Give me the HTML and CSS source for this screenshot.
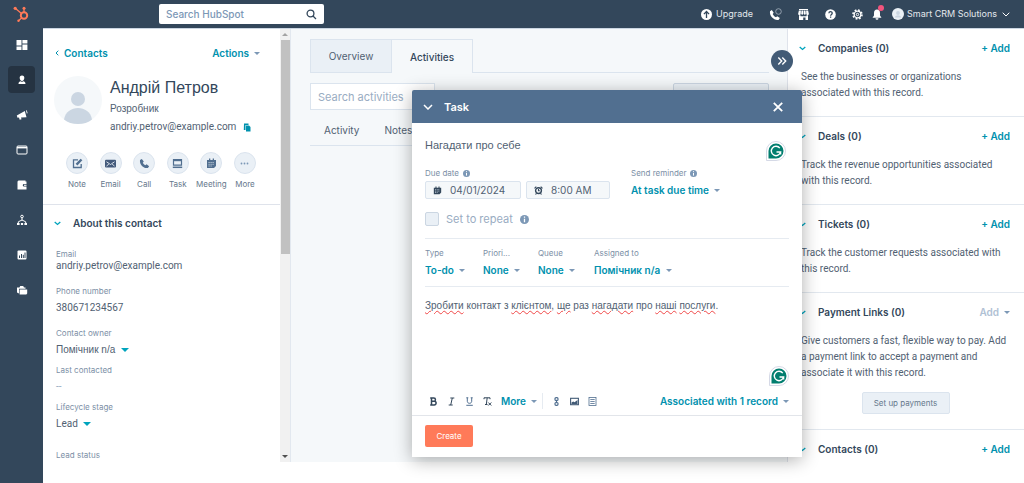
FILE: index.html
```html
<!DOCTYPE html>
<html lang="en">
<head>
<meta charset="utf-8">
<title>Contact</title>
<link rel="stylesheet" href="styles.css">
</head>
<body>
<header class="topbar">
  <a class="logo" href="#" aria-label="Home">
    <svg width="17" height="17" viewBox="0 0 17 17" fill="none" stroke="#ff7a59"><circle cx="11" cy="9.500" r="3.200" stroke-width="2"/><path d="M11 6V2.500M8.500 7.400 2.500 2.600M8.800 11.800l-3 2.800" stroke-width="1.300"/><g fill="#ff7a59" stroke="none"><circle cx="11" cy="2.300" r="1.500"/><circle cx="2.200" cy="2.300" r="1.600"/><circle cx="5.500" cy="14.700" r="1.200"/></g></svg>
  </a>
  <form class="search">
    <input type="search" placeholder="Search HubSpot" aria-label="Search HubSpot">
    <button type="button" aria-label="Search"><svg width="11" height="11" viewBox="0 0 11 11" fill="none" stroke="#33475b" stroke-width="1.300"><circle cx="4.500" cy="4.500" r="3.400"/><path d="M7 7l3 3"/></svg></button>
  </form>
  <nav class="tools">
    <a class="upgrade" href="#"><svg width="11" height="11" viewBox="0 0 11 11"><circle cx="5.500" cy="5.500" r="5.500" fill="#fff"/><path d="M5.500 9V2.700M2.900 5.100l2.600-2.600 2.600 2.600" fill="none" stroke="#33475b" stroke-width="1.300"/></svg>Upgrade</a>
    <button class="tool" aria-label="Calls"><svg width="13" height="13" viewBox="0 0 13 13"><path d="M1 3.300 2.800 2l1.900 2.700-1 1.200c.7 1.500 1.800 2.600 3.300 3.300l1.200-1 2.700 1.900-1.400 1.800C5.200 12.800.2 8 1 3.300z" fill="#fff"/><circle cx="9.500" cy="3.500" r="2.800" fill="none" stroke="#a9b5c1" stroke-width=".8"/></svg></button>
    <button class="tool" aria-label="Marketplace"><svg width="11" height="11" viewBox="0 0 11 11" fill="#fff"><path d="M1 0h9v1H1zM.9 1.600h2L2.700 5a1.200 1.200 0 0 1-2.500-.5zM3.500 1.600h1.700V5a1.200 1.200 0 0 1-2 0zM5.800 1.600h1.700L7.800 5a1.200 1.200 0 0 1-2 0zM8.100 1.600h2l.7 2.900A1.200 1.200 0 0 1 8.300 5z"/><path d="M1 6.300h1.500v1h6v-1H10V11H7.500V8.500H5.200V11H1z"/></svg></button>
    <button class="tool" aria-label="Help"><svg width="11" height="11" viewBox="0 0 11 11"><circle cx="5.500" cy="5.500" r="5.300" fill="#fff"/><path d="M3.900 4.300c0-2.200 3.300-2.100 3.300-.1 0 1.200-1.600 1.200-1.600 2.500M5.600 7.500v1.200" fill="none" stroke="#33475b" stroke-width="1.300"/></svg></button>
    <button class="tool" aria-label="Settings"><svg width="11" height="11" viewBox="0 0 11 11" fill="none" stroke="#fff"><circle cx="5.500" cy="5.500" r="3.300" stroke-width="1.300"/><circle cx="5.500" cy="5.500" r="4.500" stroke-width="1.600" stroke-dasharray="1.770"/><circle cx="5.500" cy="5.500" r="1.200"/></svg></button>
    <button class="tool bell" aria-label="Notifications"><svg width="10" height="11" viewBox="0 0 10 11" fill="#fff"><path d="M5 .5C3 .5 2 2 2 4v2.500L.5 8.700h9L8 6.500V4C8 2 7 .5 5 .5zM3.500 9.300h3a1.500 1.500 0 0 1-3 0z"/></svg><span class="dot"></span></button>
    <button class="account"><svg width="12" height="12" viewBox="0 0 12 12"><circle cx="6" cy="6" r="6" fill="#eaf0f6"/><circle cx="6" cy="5" r="1.900" fill="#cbd6e2"/><path d="M2.800 9.500c.6-3 5.800-3 6.400 0z" fill="#cbd6e2"/></svg>Smart CRM Solutions<svg class="caret-line" width="8" height="5" viewBox="0 0 8 5" fill="none" stroke="#fff"><path d="M.7.700 4 4 7.300.700"/></svg></button>
  </nav>
</header>
<div class="shell">
  <nav class="rail">
    <a href="#" aria-label="Dashboard"><svg width="12" height="12" viewBox="0 0 12 12" fill="#fff"><path d="M.5 1h5v5.500h-5zM.5 7.500h5V11h-5zM6.400 1h5v3.400h-5zM6.400 5.400h5V11h-5z"/></svg></a>
    <a href="#" class="active" aria-label="Contacts"><svg width="12" height="12" viewBox="0 0 12 12" fill="#fff"><path d="M6 1.500a2.400 2.400 0 0 1 2.300 2.600C8.300 5.600 7.400 7 6 7S3.700 5.600 3.700 4.100A2.400 2.400 0 0 1 6 1.500zM2.500 10c0-2 1-2.800 2.300-2.800L6 8l1.200-.8C8.500 7.200 9.500 8 9.500 10z"/></svg></a>
    <a href="#" aria-label="Marketing"><svg width="12" height="12" viewBox="0 0 12 12" fill="#fff"><path d="M.8 6.500 8.800 2l1.700 6.200-5.500.3.500 1.700-1.800.5L3 8.500l-1.500.3zM10 1.500l.8-.3.8 3-.8.200z"/></svg></a>
    <a href="#" aria-label="Content"><svg width="12" height="12" viewBox="0 0 12 12" fill="none" stroke="#fff"><rect x="1" y="2" width="10" height="8" rx="1"/><path d="M1 3.600h10" stroke-width="1.600"/></svg></a>
    <a href="#" aria-label="Commerce"><svg width="12" height="12" viewBox="0 0 12 12" fill="#fff"><path d="M1.500 2.500 2.500 1.500h7v1h1V5H8a1 1 0 0 0 0 2.500h2.500v3h-9z"/><path d="M8 5.700h2.500v1.100H8z"/></svg></a>
    <a href="#" aria-label="Automations"><svg width="12" height="12" viewBox="0 0 12 12" fill="none" stroke="#fff"><circle cx="6" cy="2.500" r="1.300"/><path d="M6 4v2.500M2.300 9V7.800L6 6l3.700 1.800V9"/><path d="M1 10h2.600M4.900 10h2.200M8.400 10H11" stroke-width="1.800"/></svg></a>
    <a href="#" aria-label="Reporting"><svg width="12" height="12" viewBox="0 0 12 12"><rect x="1.500" y="1.500" width="9" height="9" rx="1" fill="#fff"/><path d="M3.500 9V6.500M5.500 9V5M7.300 9V5.800M9 9V3.500" stroke="#33475b"/></svg></a>
    <a href="#" aria-label="Library"><svg width="12" height="12" viewBox="0 0 12 12" fill="#fff"><path d="M1 3.500h2.500l.7-1.500h3l.8 1.500h1.500v1.300H3v4.700l-2-1z"/><path d="M3.600 5.400h7.600v4.100l-.9.900H3.600z"/></svg></a>
  </nav>
  <div class="workspace">
    <aside class="contact">
      <div class="contact-body">
        <section class="summary">
          <div class="summary-top">
            <a class="link back" href="#"><svg width="4" height="6" viewBox="0 0 4 6" fill="none" stroke="#0091ae"><path d="M3.300.700 1 3l2.300 2.300"/></svg>Contacts</a>
            <button class="link caret">Actions</button>
          </div>
          <div class="person">
            <svg class="avatar" width="48" height="48" viewBox="0 0 48 48"><circle cx="24" cy="24" r="24" fill="#f5f8fa"/><circle cx="24" cy="23" r="7" fill="#cbd6e2"/><path d="M10 43.500C12 28 36 28 38 43.500c-7 6-21 6-28 0z" fill="#cbd6e2"/></svg>
            <div class="person-text">
              <h1 lang="uk">Андрій Петров</h1>
              <p lang="uk">Розробник</p>
              <p class="mail">andriy.petrov@example.com <button aria-label="Copy email"><svg width="8" height="9" viewBox="0 0 8 9"><path d="M1 .5h4.500V2H2.500v5H.8z" fill="#0091ae"/><path d="M3 2.500h3l1.500 1.500v4.500H3z" fill="#0091ae"/></svg></button></p>
            </div>
          </div>
          <div class="actions">
            <button><span><svg width="11" height="11" viewBox="0 0 11 11" fill="none" stroke="#516f90" stroke-width="1.300"><path d="M6 1.800H1.500v7.700h7.700V6"/><path d="M4.500 6.700 9.500 1.500" stroke-width="2.400"/></svg></span>Note</button>
            <button><span><svg width="11" height="11" viewBox="0 0 11 11"><rect y="1.800" width="11" height="7.600" rx="1" fill="#42597b"/><path d="m1.500 3.800 3 2 1 .7 1-.7 3-2M1.500 8l2.300-1.800M9.500 8 7.200 6.200" fill="none" stroke="#eaf0f6" stroke-width=".9"/></svg></span>Email</button>
            <button><span><svg width="11" height="11" viewBox="0 0 11 11" fill="#516f90"><path d="M1 2 2.800.900l2 2.600-1 1.200c.6 1.200 1.400 2 2.600 2.600l1.200-1 2.500 2-1.200 1.600C4.500 11 .3 6.500 1 2z"/></svg></span>Call</button>
            <button><span><svg width="11" height="11" viewBox="0 0 11 11" fill="none" stroke="#516f90"><path d="M1.500 1.500h8V7.200h-8z" stroke-width="1.200"/><path d="M1 2.200h9" stroke-width="2"/><path d="M.8 9.300h9.400" stroke-width="1.500"/></svg></span>Task</button>
            <button><span><svg width="11" height="11" viewBox="0 0 11 11"><path d="M1 2h9v6L8 10H1zM3 .5h1.300V2H3zM6.700.500H8V2H6.700z" fill="#516f90"/><path d="M2.500 4.500h6M2.500 6.300h6M2.500 8h3.500" stroke="#cbd6e2" stroke-width=".9" stroke-dasharray="1.200 .8"/></svg></span>Meeting</button>
            <button><span><svg width="11" height="11" viewBox="0 0 11 11" fill="#7c98b6"><circle cx="2.500" cy="5.500" r=".9"/><circle cx="5.500" cy="5.500" r=".9"/><circle cx="8.500" cy="5.500" r=".9"/></svg></span>More</button>
          </div>
        </section>
        <section class="about">
          <h2><svg width="7" height="5" viewBox="0 0 7 5" fill="none" stroke="#00a4bd" stroke-width="1.300"><path d="M.7 1 3.500 3.500 6.300 1"/></svg>About this contact</h2>
          <dl>
            <div class="snug"><dt>Email</dt><dd>andriy.petrov@example.com</dd></div>
            <div><dt>Phone number</dt><dd>380671234567</dd></div>
            <div class="picker"><dt><label for="owner">Contact owner</label></dt><dd><span class="pick teal"><select id="owner" lang="uk"><option>Помічник n/a</option></select></span></dd></div>
            <div class="picker"><dt>Last contacted</dt><dd class="empty">--</dd></div>
            <div class="last"><dt><label for="stage">Lifecycle stage</label></dt><dd><span class="pick teal"><select id="stage"><option>Lead</option></select></span></dd></div>
            <div><dt>Lead status</dt></div>
          </dl>
        </section>
      </div>
      <div class="scroller"><span class="up"></span><span class="thumb"></span><span class="down"></span></div>
    </aside>
    <main class="timeline">
      <div class="tabs"><button>Overview</button><button class="current">Activities</button></div>
      <div class="filter-row"><input type="search" placeholder="Search activities" aria-label="Search activities"><button aria-label="Collapse all"></button></div>
      <div class="subtabs"><button>Activity</button><button>Notes</button></div>
      <button class="expand" aria-label="Collapse sidebar"><svg width="10" height="10" viewBox="0 0 10 10" fill="none" stroke="#fff" stroke-width="1.400"><path d="M1.300 1.500 4.700 5 1.300 8.500M5.300 1.500 8.700 5 5.300 8.500"/></svg></button>
    </main>
    <aside class="related">
      <section>
        <h2><svg width="7" height="5" viewBox="0 0 7 5" fill="none" stroke="#00a4bd" stroke-width="1.300"><path d="M.7 1 3.500 3.500 6.300 1"/></svg>Companies (0)<button class="link">+ Add</button></h2>
        <p>See the businesses or organizations associated with this record.</p>
      </section>
      <section>
        <h2><svg width="7" height="5" viewBox="0 0 7 5" fill="none" stroke="#00a4bd" stroke-width="1.300"><path d="M.7 1 3.500 3.500 6.300 1"/></svg>Deals (0)<button class="link">+ Add</button></h2>
        <p>Track the revenue opportunities associated with this record.</p>
      </section>
      <section>
        <h2><svg width="7" height="5" viewBox="0 0 7 5" fill="none" stroke="#00a4bd" stroke-width="1.300"><path d="M.7 1 3.500 3.500 6.300 1"/></svg>Tickets (0)<button class="link">+ Add</button></h2>
        <p>Track the customer requests associated with this record.</p>
      </section>
      <section>
        <h2><svg width="7" height="5" viewBox="0 0 7 5" fill="none" stroke="#00a4bd" stroke-width="1.300"><path d="M.7 1 3.500 3.500 6.300 1"/></svg>Payment Links (0)<button class="link caret muted">Add</button></h2>
        <p>Give customers a fast, flexible way to pay. Add a payment link to accept a payment and associate it with this record.</p>
        <button class="setup">Set up payments</button>
      </section>
      <section>
        <h2><svg width="7" height="5" viewBox="0 0 7 5" fill="none" stroke="#00a4bd" stroke-width="1.300"><path d="M.7 1 3.500 3.500 6.300 1"/></svg>Contacts (0)<button class="link">+ Add</button></h2>
      </section>
    </aside>
  </div>
</div>
<section class="dialog" role="dialog" aria-labelledby="dialog-title">
  <header>
    <button aria-label="Minimize"><svg width="10" height="6" viewBox="0 0 10 6" fill="none" stroke="#fff" stroke-width="1.500"><path d="M1 1l4 4 4-4"/></svg></button>
    <h2 id="dialog-title">Task</h2>
    <button class="close" aria-label="Close"><svg width="10" height="10" viewBox="0 0 10 10" stroke="#fff" stroke-width="1.800"><path d="M.8.800l8.400 8.400M9.200.800.800 9.200"/></svg></button>
  </header>
  <div class="form">
    <div class="title-row"><input class="title" lang="uk" value="Нагадати про себе" aria-label="Task title">
      <svg class="grammar" width="20" height="20" viewBox="0 0 20 20"><path d="M10 .5A9.500 9.500 0 1 1 10 19.500H.5V10A9.500 9.500 0 0 1 10 .5z" fill="#fff" stroke="#d5d9e6"/><path d="M10 2.500a7.500 7.500 0 1 1 0 15H2.500V10A7.500 7.500 0 0 1 10 2.500z" fill="#027e6f"/><path d="M13.800 7.200A4.700 4.700 0 1 0 14.600 11H10.500M14.600 10.500V13.500" fill="none" stroke="#fff" stroke-width="1.400"/></svg></div>
    <div class="when">
      <div class="field"><label for="date">Due date <svg class="info" width="7" height="7" viewBox="0 0 7 7"><circle cx="3.500" cy="3.500" r="3.500" fill="#7c98b6"/><path d="M3.500 1.200v1M3.500 3v2.600" stroke="#fff"/></svg></label>
        <span class="box wide"><svg width="9" height="9" viewBox="0 0 11 11"><path d="M1 2h9v6L8 10H1zM3 .5h1.300V2H3zM6.700.500H8V2H6.700z" fill="#33475b"/><path d="M2.500 4.500h6M2.500 6.300h6M2.500 8h3.500" stroke="#cbd6e2" stroke-width=".9" stroke-dasharray="1.200 .8"/></svg><input id="date" value="04/01/2024"></span></div>
      <div class="field time"><span class="box"><svg width="9" height="9" viewBox="0 0 9 9" fill="none" stroke="#33475b"><circle cx="4.500" cy="4.600" r="2.900" stroke-width="1.400"/><path d="M4.500 3v1.800h1.300M.5 2.300 2.300.700M8.500 2.300 6.700.700M1.500 8.500l1-1.200M7.500 8.500l-1-1.200" stroke-width="1.100"/></svg><input value="8:00 AM" aria-label="Due time"></span></div>
      <div class="field remind"><label for="reminder">Send reminder <svg class="info" width="7" height="7" viewBox="0 0 7 7"><circle cx="3.500" cy="3.500" r="3.500" fill="#7c98b6"/><path d="M3.500 1.200v1M3.500 3v2.600" stroke="#fff"/></svg></label><span class="pick strong"><select id="reminder"><option>At task due time</option></select></span></div>
    </div>
    <label class="repeat"><input type="checkbox" disabled>Set to repeat<svg width="9" height="9" viewBox="0 0 7 7"><circle cx="3.500" cy="3.500" r="3.500" fill="#7c98b6"/><path d="M3.500 1.200v1M3.500 3v2.600" stroke="#fff"/></svg></label>
    <div class="props">
      <div class="field"><label for="type">Type</label><span class="pick strong"><select id="type"><option>To-do</option></select></span></div>
      <div class="field"><label for="priority">Priori...</label><span class="pick strong"><select id="priority"><option>None</option></select></span></div>
      <div class="field"><label for="queue">Queue</label><span class="pick strong"><select id="queue"><option>None</option></select></span></div>
      <div class="field"><label for="assignee">Assigned to</label><span class="pick strong"><select id="assignee"><option>Помічник n/a</option></select></span></div>
    </div>
    <div class="notes" lang="uk" role="textbox" aria-label="Notes" contenteditable="true" spellcheck="false"><u>Зробити</u> контакт з <u>клієнтом</u>, <u>ще</u> раз <u>нагадати</u> про <u>наші</u> <u>послуги</u>.</div>
    <svg class="grammar end" width="20" height="20" viewBox="0 0 20 20"><path d="M10 .5A9.500 9.500 0 1 1 10 19.500H.5V10A9.500 9.500 0 0 1 10 .5z" fill="#fff" stroke="#d5d9e6"/><path d="M10 2.500a7.500 7.500 0 1 1 0 15H2.500V10A7.500 7.500 0 0 1 10 2.500z" fill="#027e6f"/><path d="M13.800 7.200A4.700 4.700 0 1 0 14.600 11H10.500M14.600 10.500V13.500" fill="none" stroke="#fff" stroke-width="1.400"/></svg>
    <div class="format">
      <button class="glyph" aria-label="Bold"><svg width="9" height="9" viewBox="0 0 9 9" fill="none" stroke="#33475b" stroke-width="1.500"><path d="M2.500 1h2.300a1.600 1.600 0 0 1 0 3.300H2.500h2.800a1.800 1.800 0 0 1 0 3.600H2.500zM1.200 1h2M1.200 7.900h2"/></svg></button>
      <button class="glyph" aria-label="Italic"><svg width="9" height="9" viewBox="0 0 9 9" fill="none" stroke="#33475b"><path d="M3.300 1h4M1.700 8h4M5.300 1 3.700 8"/></svg></button>
      <button class="glyph" aria-label="Underline"><svg width="9" height="9" viewBox="0 0 9 9" fill="none" stroke="#516f90"><path d="M1.300.800h2M5.700.800h2M2.300.800v3.500c0 2.700 4.400 2.700 4.400 0V.800M1.300 8.300h6.500"/></svg></button>
      <button class="glyph" aria-label="Clear formatting"><svg width="9" height="9" viewBox="0 0 9 9" fill="none" stroke="#33475b"><path d="M1 2.200V.800h6v1.400M4.200.800 3.300 7.500M2 7.500h2.500M5.300 5.500l3 3M8.300 5.500l-3 3"/></svg></button>
      <button class="link caret">More</button>
      <span class="rule"></span>
      <button class="glyph" aria-label="Link"><svg width="9" height="9" viewBox="0 0 9 9" fill="none" stroke="#516f90" stroke-width="1.200"><rect x="3" y=".7" width="3" height="2.800" rx="1"/><rect x="3" y="5.500" width="3" height="2.800" rx="1"/><path d="M4.500 2.800v3.400"/></svg></button>
      <button class="glyph" aria-label="Image"><svg width="9" height="9" viewBox="0 0 9 9"><rect x=".6" y="1.300" width="7.800" height="6.400" fill="none" stroke="#425b76" stroke-width="1.100"/><path d="M1.500 7V5.500l1.700-1 1.300.8L7.500 3v4z" fill="#425b76"/></svg></button>
      <button class="glyph" aria-label="Snippet"><svg width="9" height="9" viewBox="0 0 9 9" fill="none" stroke="#516f90" stroke-width=".8"><rect x="1" y=".5" width="7" height="8"/><path d="M2.300 2.500h4.400M2.300 4.500h4.400M2.300 6.500h4.400"/></svg></button>
      <button class="link caret assoc">Associated with 1 record</button>
    </div>
  </div>
  <footer><button class="create">Create</button></footer>
</section>
</body>
</html>
```
FILE: styles.css
```css
* { box-sizing: border-box; }
body, h1, h2, p, dl, dd { margin: 0; }
body {
  display: flex;
  flex-direction: column;
  min-height: 100vh;
  background: #fff;
  color: #516172;
  font: 10px/16px Inter, "Liberation Sans", sans-serif;
}
button, input, select { font: inherit; color: inherit; background: none; border: 0; padding: 0; margin: 0; outline: 0; }
input { min-width: 0; }
svg { display: block; flex: none; }
a { text-decoration: none; color: inherit; }
p, dd { font-family: Roboto, "Liberation Sans", sans-serif; }
[lang="uk"] { font-family: "Liberation Sans", sans-serif; }

.topbar { display: flex; align-items: center; height: 28px; padding-right: 14px; background: #33475b; color: #e3e8ed; }
.logo { width: 159px; padding-left: 13px; }
.search { display: flex; align-items: center; width: 165px; height: 20px; padding: 0 7px; border-radius: 2px; background: #fff; }
.search input { flex: 1; }
.search input::placeholder { color: #7c98b6; font-weight: 500; opacity: 1; }
.tools { display: flex; align-items: center; gap: 16px; margin-left: auto; font-size: 9px; }
.upgrade, .account { display: flex; align-items: center; gap: 4px; }
.account { gap: 3px; }
.caret-line { margin-left: 2px; }
.bell { position: relative; margin: 0 -6px 0 -7px; }
.dot { position: absolute; top: -4px; right: -2px; width: 6px; height: 6px; border-radius: 50%; background: #f2547d; }

.shell { display: flex; flex: 1; }
.rail { display: flex; flex-direction: column; align-items: center; gap: 8px; width: 43px; padding-top: 3px; background: #33475b; }
.rail a { display: grid; place-items: center; width: 27px; height: 27px; border-radius: 4px; }
.rail .active { background: #253342; }
.workspace { display: flex; flex: 1; margin-bottom: 21px; border-top: 1px solid #cbd6e2; }

.contact { display: flex; width: 248px; border-right: 1px solid #e2e8ef; }
.contact-body { flex: 1; }
.scroller { display: flex; flex-direction: column; align-items: center; width: 10px; background: #f1f1f1; }
.up, .down { margin: 4px 0; border: 3px solid transparent; border-top-width: 0; border-bottom: 3px solid #a3a3a3; }
.down { border-bottom-width: 0; border-top: 3px solid #505050; margin-top: auto; }
.thumb { width: 9px; height: 214px; background: #c1c1c1; }
.summary { padding: 16px 20px 12px 11px; border-bottom: 1px solid #dfe3eb; }
.summary-top { display: flex; justify-content: space-between; padding-left: 1px; }
.link { color: #0091ae; font-weight: 600; white-space: nowrap; }
.back { display: flex; align-items: center; gap: 5px; }
.caret::after, .pick::after { content: ""; display: inline-block; margin-left: 5px; border: 3px solid transparent; border-top-color: #7c98b6; border-bottom: 0; vertical-align: 2px; }
.person { display: flex; gap: 8px; margin-top: 15px; }
h1 { color: #33475b; font-size: 16px; font-weight: 400; line-height: 24px; }
.person-text p { line-height: 18px; white-space: nowrap; }
.mail { display: flex; align-items: center; gap: 7px; }
.actions { display: flex; justify-content: space-between; margin: 16px 0 0 8px; }
.actions button { display: flex; flex-direction: column; align-items: center; width: 30px; font-size: 8px; color: #66788c; }
.actions span { display: grid; place-items: center; width: 22px; height: 22px; margin-bottom: 2px; border: 1px solid #dbe4ee; border-radius: 50%; background: #eaf0f6; }
h2 { display: flex; align-items: center; color: #33475b; font-size: 10px; font-weight: 600; line-height: 16px; }
.about { padding: 10px 11px 0; }
.about h2 { gap: 12px; }
dl { padding: 17px 2px 0; }
dt { height: 12px; color: #7c8fa6; font-size: 8px; line-height: 12px; }
dd { line-height: 12px; }
dl > div { margin-bottom: 13px; }
dl > div:last-child { margin-bottom: 0; }
dl > div dd { margin-top: 5px; }
dl > .snug dd { margin-top: 0; }
dl > .picker { margin-bottom: 8px; }
dl > .last { margin-bottom: 19px; }
.empty { color: #99acc2; }
select { appearance: none; line-height: 12px; }
.pick { display: flex; align-items: center; }
.teal::after { border-top-color: #00a4bd; border-width: 4px 4px 0; }

.timeline { position: relative; flex: 1; padding: 10px 18px 0 19px; background: #f5f8fa; border-right: 1px solid #dfe3eb; }
.tabs { display: flex; }
.tabs::after { content: ""; flex: 1; border-bottom: 1px solid #dbe4ee; }
.tabs button { width: 81px; height: 34px; border: 1px solid #dbe4ee; border-right: 0; background: #eaf0f6; }
.tabs .current { width: 82px; border-right: 1px solid #dbe4ee; border-bottom: 0; background: none; color: #33475b; font-weight: 500; }
.filter-row { display: flex; justify-content: space-between; margin-top: 10px; }
.filter-row input { width: 125px; height: 27px; padding: 0 7px; border: 1px solid #dbe4ee; background: #fff; font-size: 11px; }
.filter-row input::placeholder { color: #99acc2; opacity: 1; }
.filter-row button { width: 96px; height: 27px; border: 1px solid #cbd6e2; border-radius: 2px; background: #eaf0f6; }
.subtabs { display: flex; gap: 25px; height: 36px; padding: 4px 14px 0; border-bottom: 1px solid #dbe4ee; }
.expand { position: absolute; top: 21px; right: -6px; z-index: 1; display: grid; place-items: center; width: 22px; height: 22px; border-radius: 50%; background: #425b76; }

.related { width: 236px; }
.related section { padding: 11px 14px 15px 13px; border-bottom: 1px solid #e2e8ef; }
.related section:last-child { border: 0; padding-bottom: 0; }
.related h2 { margin-left: -2px; gap: 12px; }
.related h2 .link { margin-left: auto; }
.related .muted { color: #b0c1d4; }
.related p { margin-top: 13px; }
.setup { display: block; width: 88px; height: 22px; margin: 11px auto 0; border: 1px solid #dbe4ee; border-radius: 2px; background: #eaf0f6; color: #66788c; font-size: 8px; }

.dialog { position: absolute; top: 90px; right: 222px; z-index: 2; width: 390px; border-radius: 3px 3px 0 0; background: #fff; box-shadow: 0 3px 18px rgba(0, 0, 0, .32); }
.dialog header { display: flex; align-items: center; gap: 11px; height: 33px; padding: 0 19px 0 11px; border-radius: 2px 2px 0 0; background: #516f90; }
.dialog header h2 { color: #fff; font-size: 11px; }
.close { margin-left: auto; }
.form { display: flex; flex-direction: column; padding: 14px 13px 6px; }
.title-row { display: flex; justify-content: space-between; height: 30px; }
.title { flex: 1; height: 16px; font-size: 11px; }
.title-row .grammar { margin: 4px 3px 0 0; }
.field { display: flex; flex-direction: column; }
.field label { display: flex; align-items: center; gap: 4px; height: 12px; color: #7c8fa6; font-size: 8px; line-height: 12px; white-space: nowrap; }
.when { display: flex; align-items: flex-end; gap: 5px; }
.box { display: flex; align-items: center; gap: 8px; width: 84px; height: 18px; margin-top: 2px; padding: 0 7px; border: 1px solid #dbe4ee; border-radius: 2px; background: #f5f8fa; }
.wide { width: 96px; }
.box input { flex: 1; width: 0; }
.remind { margin-left: 16px; gap: 5px; padding-bottom: 3px; }
.strong select { color: #0091ae; font-weight: 600; line-height: 12px; }
.repeat { display: flex; align-items: center; gap: 7px; height: 14px; margin-top: 13px; color: #99acc2; font-size: 11px; }
.repeat input { appearance: none; width: 14px; height: 14px; border: 1px solid #cbd6e2; border-radius: 2px; background: #eaf0f6; }
.props { display: grid; grid-template-columns: 58px 55px 56px 1fr; margin-top: 12px; padding: 8px 0 10px; border: solid #e6ebf1; border-width: 1px 0; }
.props .field { gap: 5px; }
.notes { height: 68px; margin-top: 11px; outline: 0; }
.notes u { text-decoration: underline wavy #f04848 1px; text-underline-offset: 1px; }
.end { align-self: flex-end; }
.format { display: flex; align-items: center; gap: 9px; margin-top: 7px; padding-left: 4px; }
.rule { width: 1px; height: 16px; margin-left: -4px; background: #e6ebf1; }
.assoc { margin-left: auto; }
.dialog footer { padding: 9px 13px 10px; border-top: 1px solid #e2e5ea; }
.create { display: block; width: 48px; height: 22px; border-radius: 2px; background: #ff7a59; color: #fff; font-size: 8px; }
```
